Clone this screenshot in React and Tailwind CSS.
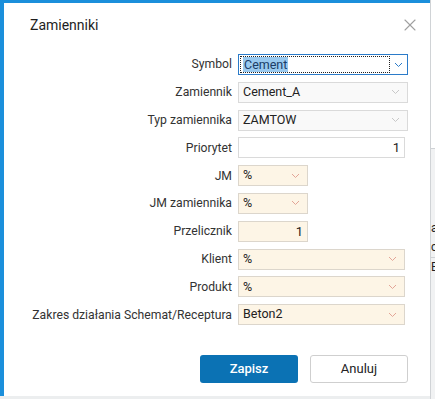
import { X } from 'lucide-react';

function Chevron({ color }) {
  return (
    <svg width="9" height="6" viewBox="0 0 9 6" className="shrink-0">
      <polyline points="1,1 4.5,4.5 8,1" fill="none" stroke={color} strokeWidth="1" />
    </svg>
  );
}

function Select({ value, width = 'w-[170px]', tone = 'gray' }) {
  const box = tone === 'cream' ? 'bg-[#fdf5e6] border-[#dcd6cc]' : 'bg-[#f9f9f9] border-[#dadada]';
  const chev = tone === 'cream' ? '#e3a597' : '#c8c8c8';
  return (
    <div className={`flex h-[21px] items-center border ${box} ${width} pl-[4px] pr-[7px]`}>
      <span className="flex-1 truncate text-[12.5px] text-[#222]">{value}</span>
      <Chevron color={chev} />
    </div>
  );
}

function NumberBox({ value, width, cream }) {
  return (
    <div className={`flex h-[21px] items-center justify-end border px-[4px] text-[13px] text-[#222] ${width} ${cream ? 'border-[#dcd6cc] bg-[#fdf5e6]' : 'border-[#dadada] bg-white'}`}>
      {value}
    </div>
  );
}

function Row({ label, children }) {
  return (
    <div className="flex items-center">
      <div className="w-[234px] pr-[6px] text-right text-[12.2px] text-[#333]">{label}</div>
      {children}
    </div>
  );
}

export default function App() {
  return (
    <div className="flex h-[399px] w-[435px] overflow-hidden bg-[#eceeef]" style={{ fontFamily: 'Roboto, "Liberation Sans", sans-serif' }}>
      <div className="h-[396px] w-[4px] shrink-0 bg-[#1b8fdb]" />
      <div className="flex h-[396px] w-[426px] shrink-0 flex-col border-t-[3px] border-[#1b8fdb] bg-white">
        <div className="flex h-[48px] items-center justify-between pl-[26px] pr-[10px] pb-[4px]">
          <h1 className="text-[14px] text-[#1e1e1e]">Zamienniki</h1>
          <X size={20} strokeWidth={1.3} className="text-[#a0a0a0]" />
        </div>
        <div className="mt-[3px] flex flex-col gap-[6.8px]">
          <Row label="Symbol">
            <div className="flex h-[21px] w-[170px] items-center border border-[#2b7bc9] bg-white p-px">
              <div className="flex h-full flex-1 items-center border border-dotted border-[#222] pl-[2px]">
                <span className="bg-[#99c9ef] px-px text-[12.5px] leading-[15px] text-[#1a3d66]">Cement</span>
              </div>
              <div className="flex w-[16px] items-center justify-center">
                <Chevron color="#2b7bc9" />
              </div>
            </div>
          </Row>
          <Row label="Zamiennik"><Select value="Cement_A" /></Row>
          <Row label="Typ zamiennika"><Select value="ZAMTOW" /></Row>
          <Row label="Priorytet"><NumberBox value="1" width="w-[167px]" /></Row>
          <Row label="JM"><Select value="%" width="w-[70px]" tone="cream" /></Row>
          <Row label="JM zamiennika"><Select value="%" width="w-[70px]" tone="cream" /></Row>
          <Row label="Przelicznik"><NumberBox value="1" width="w-[70px]" cream /></Row>
          <Row label="Klient"><Select value="%" width="w-[167px]" tone="cream" /></Row>
          <Row label="Produkt"><Select value="%" width="w-[167px]" tone="cream" /></Row>
          <Row label="Zakres działania Schemat/Receptura"><Select value="Beton2" width="w-[167px]" tone="cream" /></Row>
        </div>
        <div className="mt-[30px] flex gap-[12px] pl-[196px]">
          <button className="h-[28px] w-[98px] rounded-[3px] bg-[#0b72b4] text-[13px] font-medium text-white">Zapisz</button>
          <button className="h-[28px] w-[98px] rounded-[3px] border border-[#cfcfcf] bg-white text-[13px] text-[#222]">Anuluj</button>
        </div>
      </div>
      <div className="flex h-[399px] flex-1 flex-col overflow-hidden border-l border-[#d0d3d6] bg-[#f1f2f3] text-[12px] text-[#222]">
        <div className="h-[148px] bg-white" />
        <div className="h-px bg-[#cfd2d5]" />
        <div className="h-[70px]" />
        <div className="leading-[19px]">a</div>
        <div className="leading-[19px]">c</div>
        <div className="h-px bg-[#cfd2d5]" />
        <div className="leading-[19px]">B</div>
      </div>
    </div>
  );
}
